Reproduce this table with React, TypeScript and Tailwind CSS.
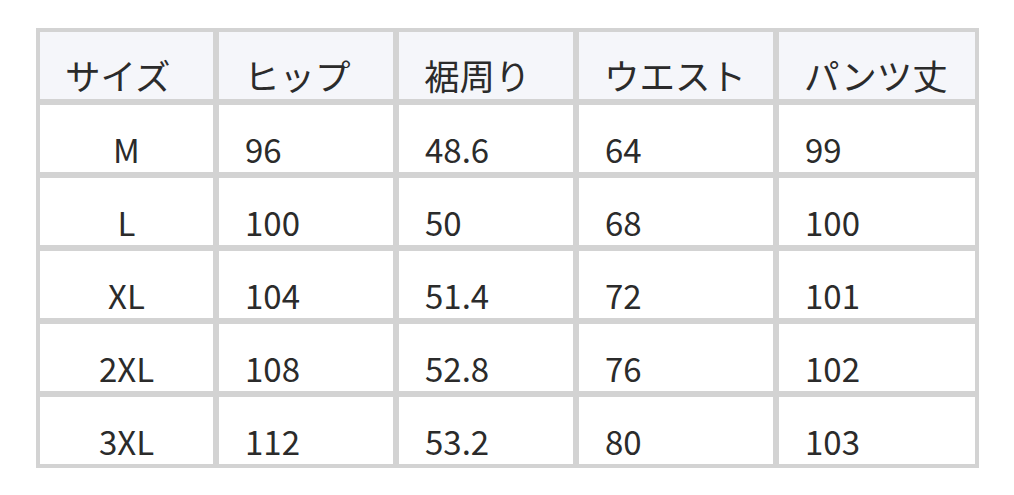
const HEAD = ["サイズ", "ヒップ", "裾周り", "ウエスト", "パンツ丈"];
const ROWS = [
  ["M", "96", "48.6", "64", "99"],
  ["L", "100", "50", "68", "100"],
  ["XL", "104", "51.4", "72", "101"],
  ["2XL", "108", "52.8", "76", "102"],
  ["3XL", "112", "53.2", "80", "103"],
];

export default function App() {
  return (
    <div className="h-[495px] w-[1014px] bg-white pl-[36px] pt-[28px] text-[#2b2b2b]" style={{ fontFamily: '"Noto Sans CJK JP", "Noto Sans", sans-serif' }}>
      <div className="grid w-max grid-cols-[173px_174px_174px_194px_196px] grid-rows-[repeat(6,67px)] gap-[6px] bg-[#d3d3d3] p-[4px]">
        {HEAD.map((h) => (
          <div key={h} className="flex items-center bg-[#f5f6fa] pl-[25px] pt-[19px] text-[35.5px] leading-none">{h}</div>
        ))}
        {ROWS.map((r) =>
          r.map((c, i) => (
            <div key={r[0] + i} className={`flex items-center bg-white pt-[22px] text-[33px] leading-none ${i === 0 ? "justify-center" : "pl-[26px]"}`}>{c}</div>
          ))
        )}
      </div>
    </div>
  );
}
